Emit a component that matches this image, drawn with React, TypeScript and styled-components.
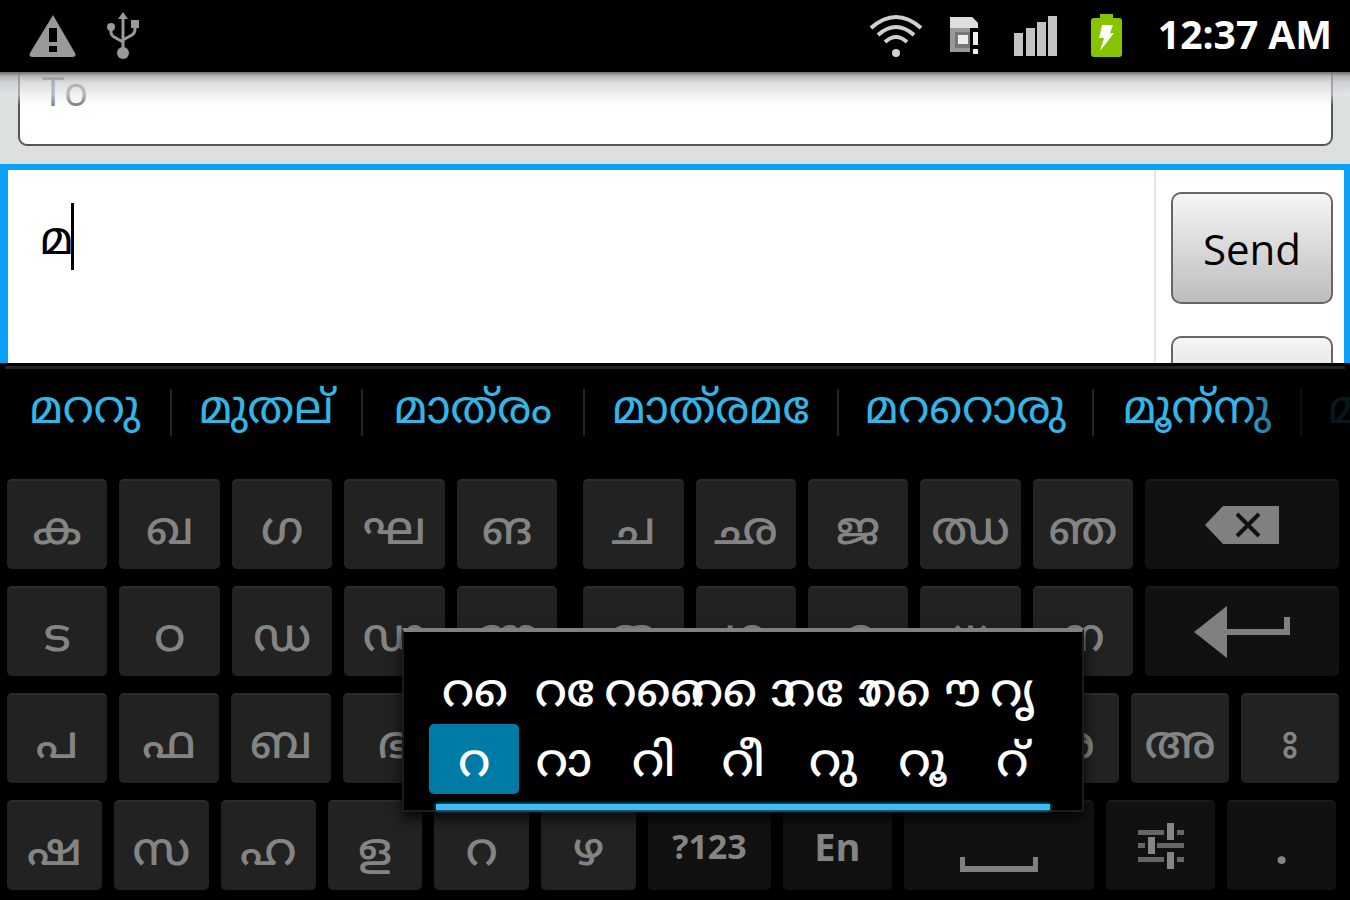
import React from "react";
import styled, { createGlobalStyle, css } from "styled-components";

const GlobalStyle = createGlobalStyle`
  *, *::before, *::after { box-sizing: border-box; }
  body {
    margin: 0;
    background: #000;
    font-family: "Open Sans", "Noto Sans Malayalam", sans-serif;
  }
  button, input, textarea { font: inherit; margin: 0; padding: 0; border: 0; }
`;

const malayalam = css`
  font-family: "Noto Sans Malayalam", "Open Sans", sans-serif;
  font-size: 46px;
  font-weight: 400;
  line-height: 60px;
`;

const Screen = styled.div`
  display: flex;
  flex-direction: column;
  min-height: 100vh;
  overflow: hidden;
`;

/* Status bar */

const StatusBar = styled.header`
  display: flex;
  align-items: center;
  justify-content: space-between;
  height: 72px;
  padding: 0 18px 0 28px;
  background: #000;
`;

const StatusGroup = styled.div<{ $gap: number }>`
  display: flex;
  align-items: center;
  gap: ${(p) => p.$gap}px;
`;

const Clock = styled.time`
  margin-left: 8px;
  padding-bottom: 4px;
  color: #fff;
  font-size: 39px;
  font-weight: 700;
  line-height: 60px;
`;

/* Message composer */

const Composer = styled.main`
  position: relative;
  display: flex;
  flex: 1 0 291px;
  flex-direction: column;
  min-height: 0;
  background: #dce0e0;
`;

const RecipientBar = styled.div`
  display: flex;
  flex: none;
  flex-direction: column;
  justify-content: flex-end;
  height: 92px;
  padding: 0 17px 18px 18px;
  overflow: hidden;

  &::before {
    content: "";
    position: absolute;
    inset: 0 0 auto;
    height: 34px;
    background: linear-gradient(#6c6e6e 0, #a4a6a6cc 4px, #c4c8caaa 10px, #e4e6e899 22px, #fff0);
    pointer-events: none;
  }
`;

const RecipientInput = styled.input`
  flex: none;
  width: 100%;
  height: 112px;
  padding: 0 22px;
  border: 2px solid #555;
  border-radius: 9px;
  background: #fff;
  color: #111;
  font-size: 40px;

  &::placeholder { color: #7c7c7c; opacity: 1; }
`;

const MessagePane = styled.div`
  position: relative;
  display: flex;
  flex: 1 1 0;
  min-height: 0;
  border: solid #0aa2f8;
  border-width: 6px 6px 0 8px;
  background: #fff;
  overflow: hidden;
`;

const MessageInput = styled.textarea`
  flex: 1;
  padding: 43px 32px 0;
  resize: none;
  outline: 0;
  background: transparent;
  color: #000;
  ${malayalam}
`;

const Caret = styled.span`
  position: absolute;
  top: 33px;
  left: 63px;
  width: 3px;
  height: 67px;
  background: #000;
`;

const Actions = styled.div`
  display: flex;
  flex-direction: column;
  gap: 32px;
  width: 190px;
  padding: 22px 11px 0 15px;
  border-left: 2px solid #e6e6e6;
`;

const ActionButton = styled.button`
  flex: none;
  height: 112px;
  border: 2px solid #666;
  border-radius: 10px;
  background: linear-gradient(#f5f6f6, #dcdcdd 45%, #bdbdbd);
  color: #000;
  font-size: 42px;
`;

/* Suggestion strip */

const Keyboard = styled.section`
  position: relative;
  flex: none;
  background: #000;
`;

const Suggestions = styled.div`
  position: relative;
  display: flex;
  align-items: center;
  height: 116px;
  padding-bottom: 18px;

  &::before {
    content: "";
    position: absolute;
    inset: 3px 5px auto;
    height: 3px;
    background: #242424;
  }

  &::after {
    content: "";
    position: absolute;
    inset: 10px 0 10px auto;
    width: 110px;
    background: linear-gradient(90deg, #0000, #000d 75%, #000d);
    pointer-events: none;
  }
`;

const Suggestion = styled.button<{ $share: number }>`
  flex: ${(p) => p.$share} 1 0;
  display: flex;
  justify-content: center;
  align-items: center;
  min-width: 0;
  height: 47px;
  border-right: 2px solid #242424;
  background: none;
  color: #33b5e5;
  white-space: nowrap;
  ${malayalam}

  &:last-child {
    flex: none;
    justify-content: flex-start;
    width: 48px;
    padding-left: 26px;
    border: 0;
  }
`;

/* Keys */

const Keys = styled.div`
  display: flex;
  flex-direction: column;
  gap: 17px;
  padding: 0 11px 10px 7px;
`;

const KeyRow = styled.div<{ $inset?: number }>`
  display: flex;
  gap: 12px;
  padding-right: ${(p) => p.$inset ?? 0}px;
`;

const Key = styled.button<{ $share?: number; $dark?: boolean; $split?: boolean; $size?: number }>`
  flex: ${(p) => p.$share ?? 100} 1 0;
  display: flex;
  justify-content: center;
  align-items: center;
  min-width: 0;
  height: 90px;
  padding-top: ${(p) => (p.$dark ? 0 : 16)}px;
  margin-left: ${(p) => (p.$split ? 14 : 0)}px;
  border-top: 2px solid ${(p) => (p.$dark ? "#1a1a1a" : "#2c2c2c")};
  border-radius: 5px;
  background: ${(p) => (p.$dark ? "#111" : "#222")};
  color: #848484;
  white-space: nowrap;
  ${malayalam}
  font-weight: 500;
  ${(p) =>
    p.$size &&
    css`
      font-family: "Open Sans", sans-serif;
      font-size: ${p.$size}px;
      font-weight: 700;
    `}
`;

/* Long-press popup */

const Popup = styled.div`
  position: absolute;
  top: 265px;
  left: 29.8%;
  width: 50.5%;
  padding: 22px 25px 0;
  border: solid #1c1c1c;
  border-width: 4px 2px 2px;
  border-top-color: #808080;
  background: #000;
  box-shadow: 0 6px 12px #000c;
`;

const PopupGrid = styled.div`
  display: grid;
  grid-template-columns: repeat(7, minmax(0, 1fr));
`;

const PopupKey = styled.button<{ $selected?: boolean; $lead?: boolean }>`
  display: flex;
  justify-content: center;
  align-items: center;
  height: 70px;
  padding: 12px 0 0 ${(p) => (p.$lead ? 16 : 0)}px;
  border-radius: 5px;
  background: ${(p) => (p.$selected ? "#007ba5" : "none")};
  color: #fff;
  white-space: nowrap;
  ${malayalam}
  font-weight: 500;
`;

const PopupBar = styled.div`
  height: 6px;
  margin: 10px 7px 0;
  background: #3cbcf0;
  box-shadow: 0 0 4px #33b5e5;
`;

const words: [string, number][] = [
  ["മററു", 171],
  ["മുതല്", 191],
  ["മാത്‌രം", 222],
  ["\u00a0മാത്‌രമ\u00a0േ", 254],
  ["മററൊരു", 255],
  ["മൂന്‌നു", 208],
  ["മ", 49],
];

const variants = [
  "റ\u00a0െ", "റ\u00a0േ", "റ\u00a0ൈ", "റ\u00a0ൊ", "റ\u00a0ോ", "റ\u00a0ൌ", "റൃ",
  "റ", "റാ", "റി", "റീ", "റു", "റൂ", "റ്",
];

const WarningIcon = () => (
  <svg width="50" height="46" viewBox="0 0 50 46" aria-label="Warning">
    <path d="M25 2 47 40q2 4-3 4H5q-5 0-3-4Z" fill="#999" />
    <path d="M21 15h8v14h-8ZM21 33h8v6h-8Z" fill="#000" />
  </svg>
);

const UsbIcon = () => (
  <svg width="34" height="50" viewBox="0 0 34 50" aria-label="USB">
    <g fill="none" stroke="#999" strokeWidth="3">
      <path d="M17 6v38M5 17v4q0 4 5 6l7 4M29 13v5q0 5-5 7l-7 4" />
    </g>
    <path d="m17 1 5 7H12ZM25 9h8v8h-8Z" fill="#999" />
    <circle cx="5" cy="16" r="4" fill="#999" />
    <circle cx="17" cy="42" r="6" fill="#999" />
  </svg>
);

const WifiIcon = () => (
  <svg width="54" height="44" viewBox="0 0 54 44" aria-label="Wi-Fi">
    <g fill="none" stroke="#d0d0d0" strokeWidth="4">
      <path d="M2 14Q27-8 52 14M9 21Q27 5 45 21M16 28Q27 18 38 28" />
    </g>
    <circle cx="27" cy="39" r="4" fill="#d0d0d0" />
  </svg>
);

const SimIcon = () => (
  <svg width="39" height="42" viewBox="0 0 39 42" aria-label="No SIM">
    <path d="M1 2h22l6 6v6h-6v23H1Z" fill="#999" />
    <path d="M1 2h22l6 6v5H1Z" fill="#ddd" />
    <path d="M6 17h16v16H6Z" fill="#777" />
    <path d="M9 20h10v9H9Z" fill="#eee" />
    <path d="M21 13h9v29h-9Z" fill="#000" />
    <path d="M24 17h5v13h-5ZM24 34h5v5h-5Z" fill="#eee" />
  </svg>
);

const SignalIcon = () => (
  <svg width="50" height="42" viewBox="0 0 50 42" aria-label="Signal">
    <path d="M0 18h9v23H0ZM12 13h9v28h-9ZM23 7h9v34h-9ZM34 1h9v40h-9Z" fill="#c4c4c4" />
  </svg>
);

const BatteryIcon = () => (
  <svg width="34" height="46" viewBox="0 0 34 46" aria-label="Charging">
    <path d="M10 1h13v4h6q3 0 3 3v33q0 3-3 3H4q-3 0-3-3V8q0-3 3-3h6Z" fill="#86c400" />
    <path d="M12 12h11l-3 8h4L10 38l4-13H9Z" fill="#fff" />
  </svg>
);

const BackspaceIcon = () => (
  <svg width="74" height="38" viewBox="0 0 74 38" aria-hidden="true">
    <path d="M18 0h56v38H18L0 19Z" fill="#808080" />
    <path d="m32 8 22 22M54 8 32 30" stroke="#111" strokeWidth="4" />
  </svg>
);

const EnterIcon = () => (
  <svg width="96" height="52" viewBox="0 0 96 52" aria-hidden="true">
    <path d="M0 26 33 0v23h57V11h6v18H33v23Z" fill="#808080" />
  </svg>
);

const SpaceIcon = () => (
  <svg width="78" height="52" viewBox="0 0 78 52" aria-hidden="true">
    <path d="M0 37h5v9h68v-9h5v15H0Z" fill="#808080" />
  </svg>
);

const SettingsIcon = () => (
  <svg width="46" height="46" viewBox="0 0 46 46" aria-hidden="true">
    <path d="M0 7h26v5H0ZM39 7h7v5h-7ZM0 20h7v5H0ZM19 20h27v5H19ZM0 34h26v5H0ZM39 34h7v5h-7Z" fill="#666" />
    <path d="M29 0h7v17h-7ZM10 14h7v17h-7ZM29 29h7v17h-7Z" fill="#858585" />
  </svg>
);

export default function App() {
  return (
    <>
      <GlobalStyle />
      <Screen>
        <StatusBar>
          <StatusGroup $gap={28}>
            <WarningIcon />
            <UsbIcon />
          </StatusGroup>
          <StatusGroup $gap={26}>
            <WifiIcon />
            <SimIcon />
            <SignalIcon />
            <BatteryIcon />
            <Clock>12:37 AM</Clock>
          </StatusGroup>
        </StatusBar>

        <Composer>
          <RecipientBar>
            <RecipientInput aria-label="To" placeholder="To" />
          </RecipientBar>
          <MessagePane>
            <MessageInput aria-label="Message" defaultValue="മ" />
            <Caret />
            <Actions>
              <ActionButton>Send</ActionButton>
              <ActionButton aria-label="Attach" />
            </Actions>
          </MessagePane>
        </Composer>

        <Keyboard aria-label="Keyboard">
          <Suggestions>
            {words.map(([word, share]) => (
              <Suggestion key={word} $share={share}>{word}</Suggestion>
            ))}
          </Suggestions>
          <Keys>
            <KeyRow>
              {[..."കഖഗഘങചഛജഝഞ"].map((c, i) => (
                <Key key={c} $split={i === 5}>{c}</Key>
              ))}
              <Key $share={193} $dark aria-label="Backspace"><BackspaceIcon /></Key>
            </KeyRow>
            <KeyRow>
              {[..."ടഠഡഢണതഥദധന"].map((c, i) => (
                <Key key={c} $split={i === 5}>{c}</Key>
              ))}
              <Key $share={193} $dark aria-label="Enter"><EnterIcon /></Key>
            </KeyRow>
            <KeyRow>
              {[..."പഫബഭമയരലവശഅഃ"].map((c, i) => (
                <Key key={c} $share={i < 5 ? 100 : 98} $split={i === 5}>
                  {c === "ഃ" ? "\u00a0ഃ\u00a0" : c}
                </Key>
              ))}
            </KeyRow>
            <KeyRow $inset={3}>
              {[..."ഷസഹളറഴ"].map((c) => (
                <Key key={c} $share={95}>{c}</Key>
              ))}
              <Key $share={123} $dark $size={34}>?123</Key>
              <Key $share={109} $dark $size={38}>En</Key>
              <Key $share={191} $dark aria-label="Space"><SpaceIcon /></Key>
              <Key $share={109} $dark aria-label="Settings"><SettingsIcon /></Key>
              <Key $share={109} $dark $size={46}>.</Key>
            </KeyRow>
          </Keys>
          <Popup>
            <PopupGrid>
              {variants.map((v, i) => (
                <PopupKey key={v} $selected={v === "റ"} $lead={i < 3}>{v}</PopupKey>
              ))}
            </PopupGrid>
            <PopupBar />
          </Popup>
        </Keyboard>
      </Screen>
    </>
  );
}
